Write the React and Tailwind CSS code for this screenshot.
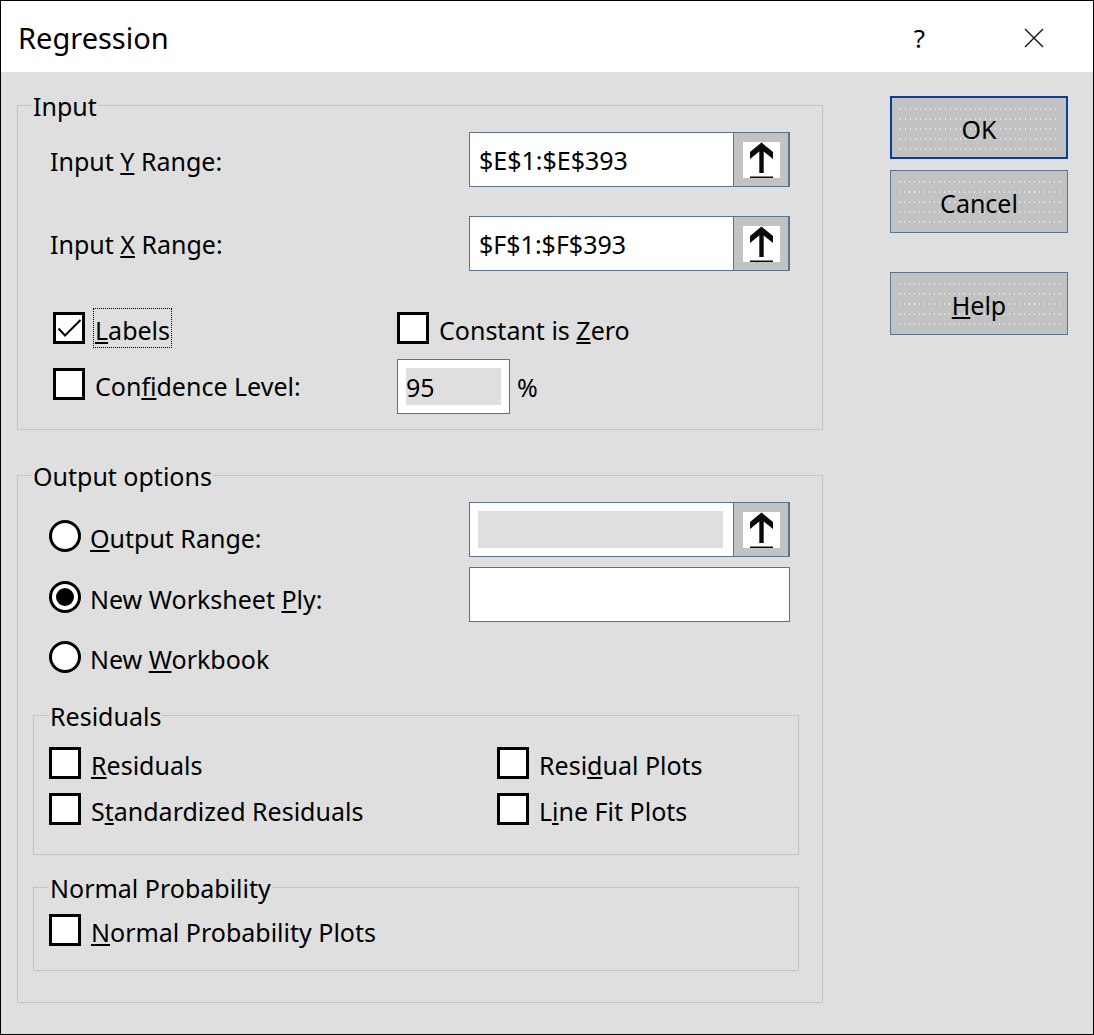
import React from "react";

// Excel "Regression" analysis dialog (Windows classic look, high DPI)

const BORDER = "border-[#5b7393]";

function U({ children }) {
  return <span className="underline decoration-2 underline-offset-[2px]">{children}</span>;
}

function Legend({ children, ml = "ml-[14px]" }) {
  return (
    <div className={`-mt-[14px] ${ml} w-fit bg-[#dfdfdf] px-[1px] leading-[28px]`}>{children}</div>
  );
}

function CheckBox({ checked }) {
  return (
    <span className="flex h-[32px] w-[32px] shrink-0 border-[3px] border-black bg-white">
      {checked && (
        <svg width="26" height="26" viewBox="0 0 26 26">
          <path d="M2.5 13.5 L9 20.5 L24.5 5" fill="none" stroke="black" strokeWidth="2" />
        </svg>
      )}
    </span>
  );
}

function Radio({ checked }) {
  return (
    <span className="flex h-[32px] w-[32px] shrink-0 items-center justify-center rounded-full border-[3px] border-black bg-white">
      {checked && <span className="h-[18px] w-[18px] rounded-full bg-black" />}
    </span>
  );
}

function Check({ checked, focus, children }) {
  return (
    <div className="flex h-[32px] items-center gap-[10px]">
      <CheckBox checked={checked} />
      {focus ? (
        <span className="-ml-[2px] flex h-[40px] items-center border border-dotted border-black px-[1px] pt-[4px] leading-[34px]">
          {children}
        </span>
      ) : (
        <span className="pt-[4px] leading-[34px]">{children}</span>
      )}
    </div>
  );
}

function Arrow() {
  return (
    <div className="h-[36px] w-[37px] bg-white">
      <svg width="37" height="36" viewBox="0 0 37 36">
        <polygon
          points="18.5,0.5 30,10 30,17 20.7,9.5 20.7,31 16.3,31 16.3,9.5 7,17 7,10"
          fill="#0a0a0a"
        />
        <rect x="7" y="34.5" width="23" height="1.5" fill="#0a0a0a" />
      </svg>
    </div>
  );
}

function RangeField({ value, disabled, picker = true }) {
  return (
    <div className={`flex h-[55px] w-[321px] shrink-0 border ${BORDER} bg-white`}>
      <div className="flex flex-1 items-center pl-[8px]">
        {disabled ? (
          <div className="h-[37px] w-[245px] bg-[#dfdfdf]" />
        ) : (
          <span className="pl-[1px] leading-[34px]">{value}</span>
        )}
      </div>
      {picker && (
        <div className={`flex w-[56px] items-center justify-center border-l border-r ${BORDER} bg-[#c1c2c1]`}>
          <Arrow />
        </div>
      )}
    </div>
  );
}

function DlgButton({ children, primary }) {
  return (
    <button
      className={`flex h-[63px] w-[178px] bg-[#c1c2c1] p-[6px] ${
        primary ? "border-2 border-[#0b3c9a]" : `border ${BORDER}`
      }`}
    >
      <span className="flex flex-1 items-center justify-center bg-[radial-gradient(circle,#e6e6e6_0.6px,transparent_0.9px)] bg-[length:5px_10px] pt-[2px] leading-[34px]">
        {children}
      </span>
    </button>
  );
}

export default function App() {
  return (
    <div className="h-[1035px] w-[1094px] border border-black bg-[#dfdfdf] font-['Noto_Sans',sans-serif] text-[25px] text-black">
      {/* title bar */}
      <div className="flex h-[71px] items-center bg-white pl-[17px] pt-[3px]">
        <span className="text-[29px] leading-[40px]">Regression</span>
        <span className="ml-auto text-[26px] leading-[40px]">?</span>
        <svg className="ml-[99px] mr-[49px]" width="20" height="20" viewBox="0 0 20 20">
          <path d="M1 1 L19 19 M19 1 L1 19" stroke="#111" strokeWidth="1.4" />
        </svg>
      </div>

      <div className="flex pl-[16px]">
        <div className="w-[806px] pt-[33px]">
          {/* Input */}
          <div className="border border-[#c4c4c4] pb-[15px]">
            <Legend>Input</Legend>
            <div className="mt-[12px] flex h-[55px] items-center justify-between pl-[32px] pr-[32px]">
              <span className="pt-[3px] leading-[34px]">
                Input <U>Y</U> Range:
              </span>
              <RangeField value="$E$1:$E$393" />
            </div>
            <div className="mt-[29px] flex h-[55px] items-center justify-between pl-[32px] pr-[32px]">
              <span className="leading-[34px]">
                Input <U>X</U> Range:
              </span>
              <RangeField value="$F$1:$F$393" />
            </div>
            <div className="mt-[41px] flex pl-[35px]">
              <div className="w-[344px]">
                <Check checked focus>
                  <U>L</U>abels
                </Check>
              </div>
              <Check>
                Constant is <U>Z</U>ero
              </Check>
            </div>
            <div className="mt-[15px] flex h-[55px] pl-[35px]">
              <div className="mt-[9px] w-[344px]">
                <Check>
                  Con<U>f</U>idence Level:
                </Check>
              </div>
              <div className={`flex h-[55px] w-[113px] items-center border ${BORDER} bg-white pl-[8px]`}>
                <div className="flex h-[37px] w-[95px] items-center bg-[#dfdfdf] leading-[34px]">95</div>
              </div>
              <span className="ml-[7px] self-center pt-[1px] leading-[34px]">%</span>
            </div>
          </div>

          {/* Output options */}
          <div className="mt-[45px] border border-[#c4c4c4] pb-[31px]">
            <Legend>Output options</Legend>
            <div className="mt-[12px] flex h-[55px] items-start justify-between pl-[31px] pr-[32px]">
              <div className="mt-[18px] flex h-[32px] items-center gap-[9px]">
                <Radio />
                <span className="pt-[4px] leading-[34px]">
                  <U>O</U>utput Range:
                </span>
              </div>
              <RangeField disabled />
            </div>
            <div className="mt-[10px] flex h-[55px] items-start justify-between pl-[31px] pr-[32px]">
              <div className="mt-[14px] flex h-[32px] items-center gap-[9px]">
                <Radio checked />
                <span className="pt-[4px] leading-[34px]">
                  New Worksheet <U>P</U>ly:
                </span>
              </div>
              <RangeField picker={false} />
            </div>
            <div className="mt-[19px] flex h-[32px] items-center gap-[9px] pl-[31px]">
              <Radio />
              <span className="pt-[4px] leading-[34px]">
                New <U>W</U>orkbook
              </span>
            </div>

            {/* Residuals */}
            <div className="ml-[15px] mt-[42px] w-[766px] border border-[#c4c4c4] pb-[29px]">
              <Legend ml="ml-[15px]">Residuals</Legend>
              <div className="mt-[17px] flex pl-[15px]">
                <div className="w-[448px]">
                  <Check>
                    <U>R</U>esiduals
                  </Check>
                </div>
                <Check>
                  Resi<U>d</U>ual Plots
                </Check>
              </div>
              <div className="mt-[14px] flex pl-[15px]">
                <div className="w-[448px]">
                  <Check>
                    S<U>t</U>andardized Residuals
                  </Check>
                </div>
                <Check>
                  L<U>i</U>ne Fit Plots
                </Check>
              </div>
            </div>

            {/* Normal Probability */}
            <div className="ml-[15px] mt-[32px] w-[766px] border border-[#c4c4c4] pb-[24px]">
              <Legend ml="ml-[15px]">Normal Probability</Legend>
              <div className="mt-[12px] pl-[15px]">
                <Check>
                  <U>N</U>ormal Probability Plots
                </Check>
              </div>
            </div>
          </div>
        </div>

        {/* buttons */}
        <div className="ml-[67px] flex w-[178px] flex-col pt-[24px]">
          <DlgButton primary>OK</DlgButton>
          <div className="mt-[11px]">
            <DlgButton>Cancel</DlgButton>
          </div>
          <div className="mt-[39px]">
            <DlgButton>
              <U>H</U>elp
            </DlgButton>
          </div>
        </div>
      </div>
    </div>
  );
}
